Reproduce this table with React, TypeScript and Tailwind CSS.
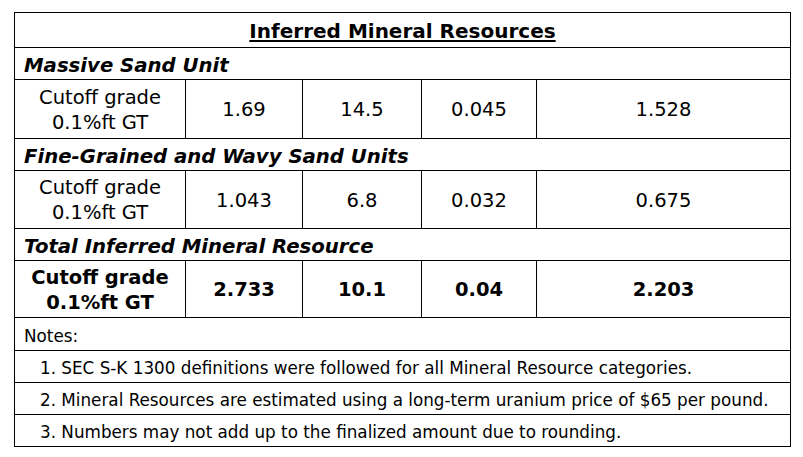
const sections = [
  {
    title: 'Massive Sand Unit',
    values: ['1.69', '14.5', '0.045', '1.528'],
    bold: false,
    h: 'h-[59px]',
  },
  {
    title: 'Fine-Grained and Wavy Sand Units',
    values: ['1.043', '6.8', '0.032', '0.675'],
    bold: false,
    h: 'h-[58px]',
  },
  {
    title: 'Total Inferred Mineral Resource',
    values: ['2.733', '10.1', '0.04', '2.203'],
    bold: true,
    h: 'h-[57px]',
  },
];

const notes = [
  '1. SEC S-K 1300 definitions were followed for all Mineral Resource categories.',
  '2. Mineral Resources are estimated using a long-term uranium price of $65 per pound.',
  '3. Numbers may not add up to the finalized amount due to rounding.',
];

function App() {
  return (
    <div className="min-h-screen bg-white pt-[12px] pl-[14px] text-black font-['DejaVu_Sans',Verdana,sans-serif]">
      <table className="w-[776px] table-fixed border-collapse text-[19.5px] leading-[25px]">
        <colgroup>
          <col className="w-[171px]" />
          <col className="w-[117px]" />
          <col className="w-[119px]" />
          <col className="w-[115px]" />
          <col className="w-[254px]" />
        </colgroup>
        <tbody>
          <tr className="h-[35px]">
            <td colSpan={5} className="border border-black text-center font-bold underline underline-offset-2 text-[20px] pt-[2px]">
              Inferred Mineral Resources
            </td>
          </tr>
          {sections.map((s) => (
            <>
              <tr key={s.title} className="h-[32px]">
                <td colSpan={5} className="border border-black px-[9px] pt-[3px] font-bold italic text-[19.7px]">
                  {s.title}
                </td>
              </tr>
              <tr key={s.title + '-data'} className={s.h}>
                <td className={`border border-black text-center pt-[1px] ${s.bold ? 'font-bold' : ''}`}>
                  Cutoff grade
                  <br />
                  0.1%ft GT
                </td>
                {s.values.map((v, i) => (
                  <td key={i} className={`border border-black text-center pt-[1px] ${s.bold ? 'font-bold' : ''}`}>
                    {v}
                  </td>
                ))}
              </tr>
            </>
          ))}
          <tr className="h-[33px]">
            <td colSpan={5} className="border border-black px-[9px] pt-[4px] text-[16.8px]">
              Notes:
            </td>
          </tr>
          {notes.map((n) => (
            <tr key={n} className="h-[32px]">
              <td colSpan={5} className="border border-black pl-[25px] pt-[3px] text-[16.8px]">
                {n}
              </td>
            </tr>
          ))}
        </tbody>
      </table>
    </div>
  );
}

export default App;
